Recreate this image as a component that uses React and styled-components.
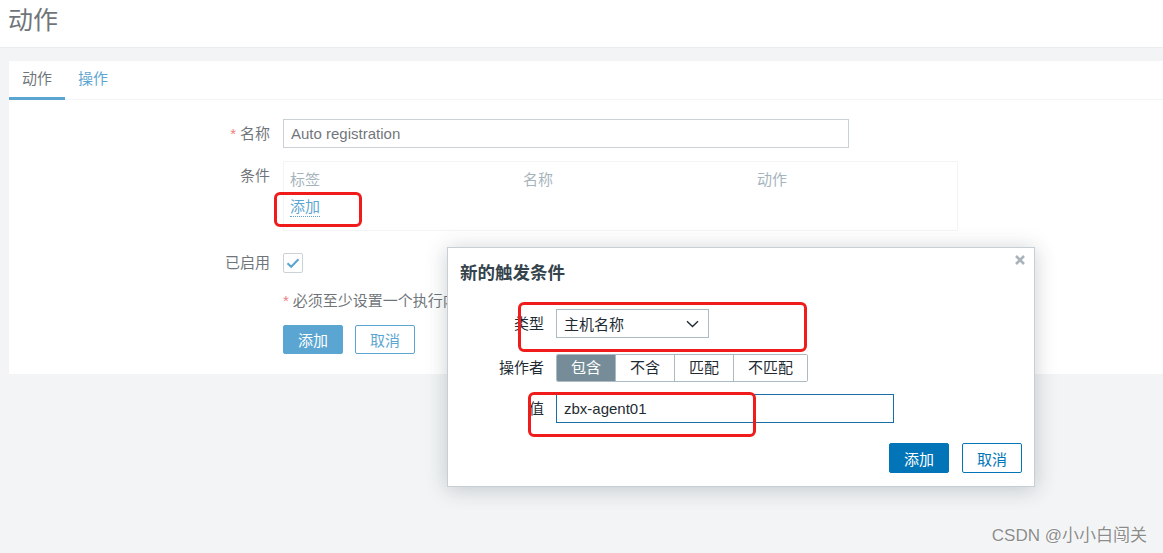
import React from 'react';
import styled, { createGlobalStyle } from 'styled-components';

const colors = {
  text: '#1f2c33',
  muted: '#768d99',
  blue: '#0275b8',
  border: '#acbbc2',
  light: '#ebeef0',
  red: '#e33734',
  mark: '#f01c1c',
};

const Global = createGlobalStyle`
  html, body {
    margin: 0;
    padding: 0;
  }
  body {
    font-family: "Liberation Sans", Arial, "Noto Sans CJK SC", sans-serif;
    font-size: 15px;
    color: ${colors.text};
  }
  * {
    box-sizing: border-box;
  }
`;

const Page = styled.div`
  position: relative;
  width: 1163px;
  height: 553px;
  overflow: hidden;
  background: ${colors.light};
`;

const Header = styled.div`
  height: 48px;
  padding: 4px 8px 0;
  background: #fff;
  border-bottom: 1px solid #dfe4e7;
`;

const Title = styled.h1`
  margin: 0;
  font-size: 25px;
  font-weight: normal;
  line-height: 32px;
`;

const Main = styled.div`
  padding: 12px 0 0 8px;
`;

const Card = styled.div`
  width: 1170px;
  background: #fff;
  border: 1px solid ${colors.light};
`;

const TabBar = styled.div`
  display: flex;
  height: 39px;
  border-bottom: 1px solid ${colors.light};
`;

const Tab = styled.div`
  height: 39px;
  padding: 0 13px;
  line-height: 36px;
  color: ${(p) => (p.$active ? colors.text : colors.blue)};
  border-bottom: 3px solid ${(p) => (p.$active ? colors.blue : 'transparent')};
`;

const Form = styled.div`
  padding: 19px 0 20px;
`;

const Row = styled.div`
  display: grid;
  grid-template-columns: ${(p) => p.$label || '261px'} auto;
  column-gap: ${(p) => p.$gap || '13px'};
  align-items: start;
  margin-top: ${(p) => p.$mt || '0px'};
`;

const Label = styled.div`
  text-align: right;
  line-height: ${(p) => p.$lh || '29px'};
  white-space: nowrap;
`;

const Star = styled.span`
  color: ${colors.red};
  margin-right: 4px;
`;

const TextInput = styled.div`
  width: ${(p) => p.$w};
  height: 29px;
  padding: 0 7px;
  line-height: 27px;
  background: #fff;
  border: 1px solid ${(p) => (p.$focus ? '#1a6ea8' : colors.border)};
`;

const CondTable = styled.div`
  width: 675px;
  height: 70px;
  padding: 7px 6px 0;
  border: 1px solid ${colors.light};
`;

const CondHead = styled.div`
  display: grid;
  grid-template-columns: 233px 234px 1fr;
  line-height: 22px;
  color: ${colors.muted};
`;

const Link = styled.span`
  display: inline-block;
  margin-top: 6px;
  line-height: 19px;
  color: ${colors.blue};
  border-bottom: 1px dotted ${colors.blue};
`;

const Check = styled.div`
  width: 20px;
  height: 20px;
  display: flex;
  align-items: center;
  justify-content: center;
  background: #fff;
  border: 1px solid ${colors.border};
  border-radius: 2px;
`;

const Note = styled.div`
  line-height: 19px;
  white-space: nowrap;
`;

const Buttons = styled.div`
  display: flex;
  gap: ${(p) => p.$gap || '12px'};
  justify-content: ${(p) => p.$end ? 'flex-end' : 'flex-start'};
`;

const Button = styled.div`
  width: 60px;
  height: ${(p) => p.$h || '29px'};
  display: flex;
  align-items: center;
  justify-content: center;
  border-radius: 2px;
  border: 1px solid ${colors.blue};
  background: ${(p) => (p.$primary ? colors.blue : '#fff')};
  color: ${(p) => (p.$primary ? '#fff' : colors.blue)};
`;

const Overlay = styled.div`
  position: absolute;
  inset: 0;
  background: rgba(255, 255, 255, 0.35);
`;

const Dialog = styled.div`
  position: absolute;
  left: 447px;
  top: 247px;
  width: 588px;
  padding: 12px 12px 13px 0;
  background: #fff;
  border: 1px solid #c7cfd4;
  box-shadow: 0 2px 20px rgba(40, 55, 65, 0.24);
`;

const DialogTitle = styled.h4`
  margin: 0 0 0 12px;
  font-size: 17.5px;
  font-weight: bold;
  line-height: 26px;
  color: #34434c;
`;

const Close = styled.div`
  position: absolute;
  right: 9px;
  top: 7px;
  width: 10px;
  height: 10px;
  display: flex;
`;

const Select = styled.div`
  width: 153px;
  height: 29px;
  display: flex;
  align-items: center;
  justify-content: space-between;
  padding: 0 9px 0 7px;
  border: 1px solid ${colors.border};
`;

const Segments = styled.div`
  display: flex;
  width: max-content;
  height: 28px;
  border: 1px solid ${colors.border};
  border-radius: 2px;
  overflow: hidden;
`;

const Segment = styled.div`
  padding: 0 14px;
  line-height: 26px;
  background: ${(p) => (p.$active ? colors.muted : '#fff')};
  color: ${(p) => (p.$active ? '#fff' : colors.text)};
  & + & {
    border-left: 1px solid ${colors.border};
  }
`;

const Footer = styled.div`
  margin-top: 20px;
`;

const Mark = styled.div`
  position: absolute;
  border: 3px solid ${colors.mark};
  border-radius: 6px;
`;

const Watermark = styled.div`
  position: absolute;
  right: 16px;
  bottom: 7px;
  font-size: 17px;
  color: #8c8c8c;
  text-shadow: 0 0 2px #fff, 0 0 1px #fff;
`;

const ChevronDown = () => (
  <svg width="13" height="8" viewBox="0 0 13 8">
    <path d="M1 1.2l5.5 5.3 5.5-5.3" fill="none" stroke={colors.text} strokeWidth="1.4" />
  </svg>
);

const CheckMark = () => (
  <svg width="14" height="12" viewBox="0 0 14 12">
    <path d="M1.5 6.2l3.7 3.6L12.5 2.2" fill="none" stroke={colors.blue} strokeWidth="2" />
  </svg>
);

const Cross = () => (
  <svg width="10" height="10" viewBox="0 0 10 10">
    <path d="M1 1l8 8M9 1l-8 8" stroke="#aab3ba" strokeWidth="2.6" />
  </svg>
);

const operators = ['包含', '不含', '匹配', '不匹配'];

const App = () => (
  <Page>
    <Global />
    <Header>
      <Title>动作</Title>
    </Header>
    <Main>
      <Card>
        <TabBar>
          <Tab $active>动作</Tab>
          <Tab>操作</Tab>
        </TabBar>
        <Form>
          <Row>
            <Label><Star>*</Star>名称</Label>
            <TextInput $w="566px">Auto registration</TextInput>
          </Row>
          <Row $mt="13px">
            <Label>条件</Label>
            <CondTable>
              <CondHead>
                <span>标签</span>
                <span>名称</span>
                <span>动作</span>
              </CondHead>
              <Link>添加</Link>
            </CondTable>
          </Row>
          <Row $mt="22px">
            <Label $lh="20px">已启用</Label>
            <Check><CheckMark /></Check>
          </Row>
          <Row $mt="18px">
            <span />
            <Note><Star>*</Star>必须至少设置一个执行内容。</Note>
          </Row>
          <Row $mt="15px">
            <span />
            <Buttons>
              <Button $primary>添加</Button>
              <Button>取消</Button>
            </Buttons>
          </Row>
        </Form>
      </Card>
    </Main>
    <Overlay />
    <Dialog>
      <DialogTitle>新的触发条件</DialogTitle>
      <Close><Cross /></Close>
      <Row $label="96px" $gap="12px" $mt="23px">
        <Label>类型</Label>
        <Select>
          <span>主机名称</span>
          <ChevronDown />
        </Select>
      </Row>
      <Row $label="96px" $gap="12px" $mt="16px">
        <Label $lh="28px">操作者</Label>
        <Segments>
          {operators.map((op, i) => (
            <Segment key={op} $active={i === 0}>{op}</Segment>
          ))}
        </Segments>
      </Row>
      <Row $label="96px" $gap="12px" $mt="12px">
        <Label>值</Label>
        <TextInput $w="338px" $focus>zbx-agent01</TextInput>
      </Row>
      <Footer>
        <Buttons $end $gap="13px">
          <Button $primary $h="30px">添加</Button>
          <Button $h="30px">取消</Button>
        </Buttons>
      </Footer>
    </Dialog>
    <Mark style={{ left: 274, top: 192, width: 88, height: 35 }} />
    <Mark style={{ left: 518, top: 302, width: 289, height: 50 }} />
    <Mark style={{ left: 528, top: 392, width: 228, height: 45 }} />
    <Watermark>CSDN @小小白闯关</Watermark>
  </Page>
);

export default App;
